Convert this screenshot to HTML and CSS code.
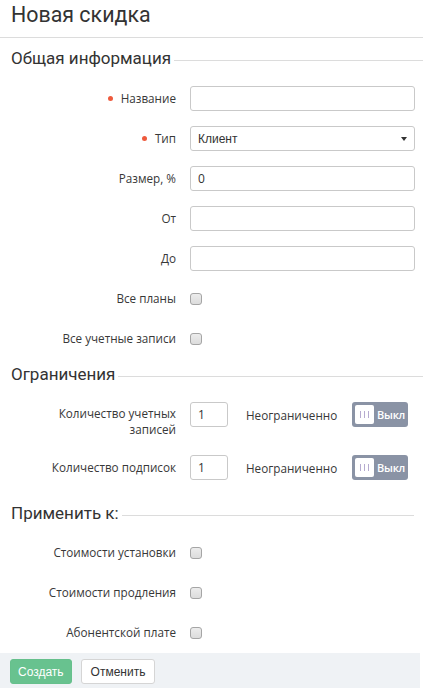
FILE: index.html
```html
<!DOCTYPE html>
<html lang="ru">
<head>
<meta charset="utf-8">
<title>Новая скидка</title>
<link rel="stylesheet" href="styles.css">
</head>
<body>
<h1 class="page-title">Новая скидка</h1>

<h2 class="sec sec-first">Общая информация</h2>
<div class="row">
  <label class="lbl req">Название</label>
  <input class="inp" type="text">
</div>
<div class="row">
  <label class="lbl req">Тип</label>
  <div class="sel-wrap">
    <select class="sel"><option>Клиент</option></select>
  </div>
</div>
<div class="row">
  <label class="lbl">Размер, %</label>
  <input class="inp" type="text" value="0">
</div>
<div class="row">
  <label class="lbl">От</label>
  <input class="inp" type="text">
</div>
<div class="row">
  <label class="lbl">До</label>
  <input class="inp" type="text">
</div>
<div class="row">
  <label class="lbl">Все планы</label>
  <span><input class="chk" type="checkbox"></span>
</div>
<div class="row">
  <label class="lbl">Все учетные записи</label>
  <span><input class="chk" type="checkbox"></span>
</div>

<h2 class="sec sec-second">Ограничения</h2>
<div class="row row-top">
  <label class="lbl lbl-multi">Количество учетных<br>записей</label>
  <div class="limit">
    <input class="inp inp-small" type="text" value="1">
    <span class="unl">Неограниченно</span>
    <span class="toggle"><span class="knob"><i></i><i></i><i></i></span><span class="tg-text">Выкл</span></span>
  </div>
</div>
<div class="row">
  <label class="lbl">Количество подписок</label>
  <div class="limit">
    <input class="inp inp-small" type="text" value="1">
    <span class="unl">Неограниченно</span>
    <span class="toggle"><span class="knob"><i></i><i></i><i></i></span><span class="tg-text">Выкл</span></span>
  </div>
</div>

<h2 class="sec sec-third">Применить к:</h2>
<div class="row">
  <label class="lbl">Стоимости установки</label>
  <span><input class="chk" type="checkbox"></span>
</div>
<div class="row">
  <label class="lbl">Стоимости продления</label>
  <span><input class="chk" type="checkbox"></span>
</div>
<div class="row">
  <label class="lbl">Абонентской плате</label>
  <span><input class="chk" type="checkbox"></span>
</div>

<div class="footer">
  <button class="btn btn-primary" type="button">Создать</button>
  <button class="btn btn-default" type="button">Отменить</button>
</div>
</body>
</html>
```

FILE: styles.css
```css
* { box-sizing: border-box; }

body {
  margin: 0;
  background: #fff;
  color: #333;
  font-family: "Open Sans", "Noto Sans", sans-serif;
  font-size: 11.7px;
}

.page-title {
  margin: 0;
  padding: 1px 11px 8px;
  font-family: Roboto, "Open Sans", sans-serif;
  font-size: 21.4px;
  font-weight: 400;
  line-height: 28px;
  color: #333;
  border-bottom: 1px solid #dcdcdc;
}

.sec {
  display: flex;
  align-items: center;
  margin: 0;
  padding-left: 11px;
  font-family: Roboto, "Open Sans", sans-serif;
  font-size: 17px;
  font-weight: 400;
  line-height: 24px;
  color: #333;
}
.sec::after {
  content: "";
  flex: 1;
  margin-top: 5px;
  margin-left: 3px;
  border-top: 1px solid #dcdcdc;
}
.sec-first { margin-top: 8px; }
.sec-second { margin-top: 11px; }
.sec-third { margin-top: 21px; }
.sec-third::after { margin-right: 9px; }

.row {
  display: grid;
  grid-template-columns: 166px 1fr;
  column-gap: 14px;
  align-items: center;
  min-height: 25px;
  margin-top: 15px;
  padding: 0 8px 0 10px;
}
.sec + .row { margin-top: 16px; }
.sec-third + .row { margin-top: 15px; }
.row-top { align-items: start; }

.lbl {
  text-align: right;
  line-height: 16px;
  padding: 3px 0 4px;
  color: #383838;
}
.row-top .lbl { padding: 3px 0; }
.req::before {
  content: "";
  display: inline-block;
  width: 5px;
  height: 5px;
  border-radius: 50%;
  background: #ee5a3d;
  margin-right: 8px;
  vertical-align: 2px;
}

.inp, .sel {
  display: block;
  width: 100%;
  height: 25px;
  padding: 0 7px;
  border: 1px solid #c9c9c9;
  border-radius: 3px;
  background: #fff;
  color: #333;
  font-family: "Open Sans", sans-serif;
  font-size: 12px;
  outline: none;
}
.inp-small { width: 38px; flex: none; }

.sel-wrap { position: relative; }
.sel {
  appearance: none;
  -webkit-appearance: none;
  font-family: "Liberation Sans", Arial, sans-serif;
  font-size: 12px;
}
.sel-wrap::after {
  content: "";
  position: absolute;
  right: 8px;
  top: 11px;
  border-left: 3px solid transparent;
  border-right: 3px solid transparent;
  border-top: 4px solid #333;
}

.chk {
  appearance: none;
  -webkit-appearance: none;
  display: block;
  margin: 0;
  width: 12px;
  height: 12px;
  border: 1px solid #a5a5a5;
  border-radius: 3px;
  background: linear-gradient(#ececec, #dcdcdc);
}

.limit {
  display: flex;
  align-items: center;
}
.unl {
  margin-left: 18px;
  color: #383838;
}
.toggle {
  display: flex;
  align-items: center;
  margin-left: auto;
  margin-right: 7px;
  width: 56px;
  height: 25px;
  padding: 3px;
  border-radius: 3px;
  background: #8a93a5;
}
.knob {
  display: flex;
  align-items: center;
  justify-content: center;
  gap: 3px;
  width: 20px;
  height: 19px;
  border-radius: 2px;
  background: #fff;
}
.knob i {
  display: block;
  width: 1px;
  height: 7px;
  background: #b6abd0;
}
.tg-text {
  margin-left: 3px;
  color: #fff;
  font-size: 11px;
  font-weight: 600;
  letter-spacing: -0.3px;
}

.footer {
  display: flex;
  gap: 9px;
  margin: 8px 3px 0 0;
  padding: 6px 10px 4px;
  background: #eff2f5;
}
.btn {
  height: 25px;
  padding: 0 9px;
  border-radius: 3px;
  font-family: "Liberation Sans", Arial, sans-serif;
  font-size: 12px;
  cursor: pointer;
}
.btn-primary {
  padding: 0 7px;
  border: 1px solid #66c08c;
  background: #68c28f;
  color: #fff;
}
.btn-default {
  border: 1px solid #d5d5d5;
  background: #fff;
  color: #333;
}
```
